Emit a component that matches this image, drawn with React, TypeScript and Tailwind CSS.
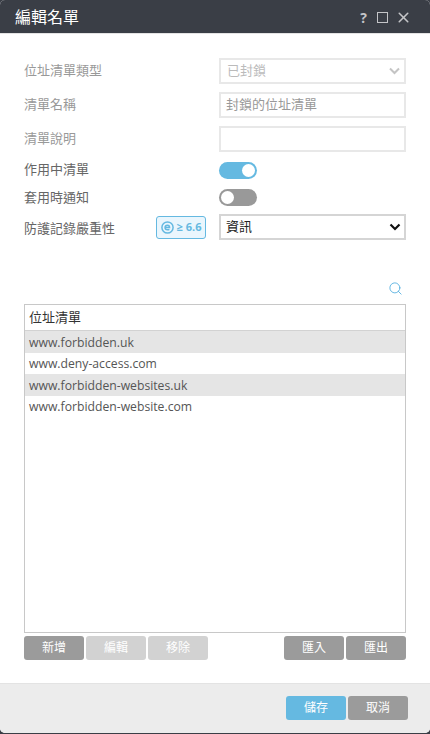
import { Search, X } from "lucide-react";

const font = "[font-family:'Open_Sans','Noto_Sans_CJK_TC',sans-serif]";

function Label({ children, dim }: { children: string; dim?: boolean }) {
  return <span className={`text-[13px] ${dim ? "text-[#999]" : "text-[#666]"}`}>{children}</span>;
}

function Toggle({ on }: { on?: boolean }) {
  return (
    <span className={`flex h-[17px] w-[38px] items-center rounded-full px-[2px] ${on ? "justify-end bg-[#65b9e1]" : "justify-start bg-[#999]"}`}>
      <span className="h-[13px] w-[13px] rounded-full bg-white" />
    </span>
  );
}

function Btn({ children, tone = "gray" }: { children: string; tone?: "gray" | "off" | "blue" }) {
  const bg = tone === "gray" ? "bg-[#9b9b9b]" : tone === "off" ? "bg-[#d2d2d2]" : "bg-[#65b9e1]";
  return (
    <button type="button" className={`h-6 w-[60px] rounded-[3px] text-[12px] text-white ${bg}`}>
      {children}
    </button>
  );
}

const rows = ["www.forbidden.uk", "www.deny-access.com", "www.forbidden-websites.uk", "www.forbidden-website.com"];

export default function App() {
  return (
    <div className={`h-[734px] w-[430px] overflow-hidden bg-[#3a3e46] ${font}`}>
      <div className="flex h-[733px] flex-col overflow-hidden rounded-[5px] bg-white">
        <header className="flex h-[34px] shrink-0 items-center justify-between border-b border-[#e3e3e3] bg-[#3a3e46] pl-[15px] pr-[18px] text-white">
          <h1 className="text-[16px] leading-none">編輯名單</h1>
          <div className="mt-[2px] flex items-center gap-[7px] text-[#c4c5c8]">
            <span className="w-[9px] text-center text-[14px] font-bold leading-none">?</span>
            <span className="ml-[2px] h-[11px] w-[11px] border-[1.5px] border-[#c4c5c8]" />
            <X size={17} strokeWidth={2.2} />
          </div>
        </header>

        <main className="flex flex-1 flex-col px-6 pt-6">
          <div className="flex h-[26px] items-center justify-between">
            <Label dim>位址清單類型</Label>
            <div className="flex h-[26px] w-[187px] items-center justify-between border-2 border-[#e8e8e8] pl-[6px] pr-[3px] text-[13px] text-[#bbb]">
              <span>已封鎖</span>
              <svg width="13" height="8" viewBox="0 0 13 8" fill="none" stroke="#c4c4c4" strokeWidth="2"><path d="M2 1.5 6.5 6 11 1.5" /></svg>
            </div>
          </div>
          <div className="mt-2 flex h-[26px] items-center justify-between">
            <Label dim>清單名稱</Label>
            <div className="flex h-[26px] w-[187px] items-center border-2 border-[#e8e8e8] pl-[5px] text-[13px] text-[#999]">封鎖的位址清單</div>
          </div>
          <div className="mt-2 flex h-[26px] items-center justify-between">
            <Label dim>清單說明</Label>
            <div className="h-[26px] w-[187px] border-2 border-[#e8e8e8]" />
          </div>
          <div className="mt-[10px] flex h-[17px] items-center">
            <span className="-mt-[5px] w-[195px]"><Label>作用中清單</Label></span>
            <Toggle on />
          </div>
          <div className="mt-[10px] flex h-[17px] items-center">
            <span className="-mt-[4px] w-[195px]"><Label>套用時通知</Label></span>
            <Toggle />
          </div>
          <div className="mt-2 flex h-[26px] items-center">
            <span className="w-[132px]"><Label>防護記錄嚴重性</Label></span>
            <span className="flex h-[23px] w-[50px] items-center justify-center gap-[3px] rounded-[3px] border border-[#65b9e1] bg-[#eaf6fd] text-[11px] font-bold text-[#65b9e1]">
              <svg width="13" height="13" viewBox="0 0 13 13" fill="none" stroke="#65b9e1"><circle cx="6.5" cy="6.5" r="5.6" strokeWidth="1.5" /><path d="M4 6.5h4.6c0-1.4-.9-2.2-2.1-2.2S4 5.2 4 6.5s.9 2.3 2.5 2.3c.8 0 1.4-.2 1.9-.5" strokeWidth="1.4" /></svg>
              <span className="whitespace-nowrap">≥ 6.6</span>
            </span>
            <div className="ml-[13px] flex h-[26px] w-[187px] items-center justify-between border-2 border-[#d5d5d5] pl-[5px] pr-[3px] text-[13px] text-[#222]">
              <span>資訊</span>
              <svg width="12" height="8" viewBox="0 0 12 8" fill="none" stroke="#111" strokeWidth="2.2"><path d="M1.5 1.5 6 6l4.5-4.5" /></svg>
            </div>
          </div>

          <div className="mt-[41px] flex justify-end pr-[3px]">
            <Search size={15} strokeWidth={1.3} className="text-[#46a9dc]" />
          </div>

          <div className="mt-[8px] h-[329px] border border-[#c8c8c8]">
            <div className="flex h-[26px] items-center border-b border-[#d2d2d2] pl-[4px] text-[13px] text-[#333]">位址清單</div>
            {rows.map((row, i) => (
              <div key={row} className={`flex h-[21.5px] items-center pl-[4px] pt-[2px] text-[12.2px] text-[#555] ${i % 2 === 0 ? "bg-[#e5e5e5]" : ""}`}>
                {row}
              </div>
            ))}
          </div>

          <div className="mt-[3px] flex items-center gap-[2px]">
            <Btn>新增</Btn>
            <Btn tone="off">編輯</Btn>
            <Btn tone="off">移除</Btn>
            <span className="flex-1" />
            <Btn>匯入</Btn>
            <Btn>匯出</Btn>
          </div>
        </main>

        <footer className="flex h-[50px] shrink-0 items-start justify-end gap-[2px] border-t border-[#e3e3e3] bg-[#ececec] pr-[22px] pt-3">
          <Btn tone="blue">儲存</Btn>
          <Btn>取消</Btn>
        </footer>
      </div>
    </div>
  );
}
